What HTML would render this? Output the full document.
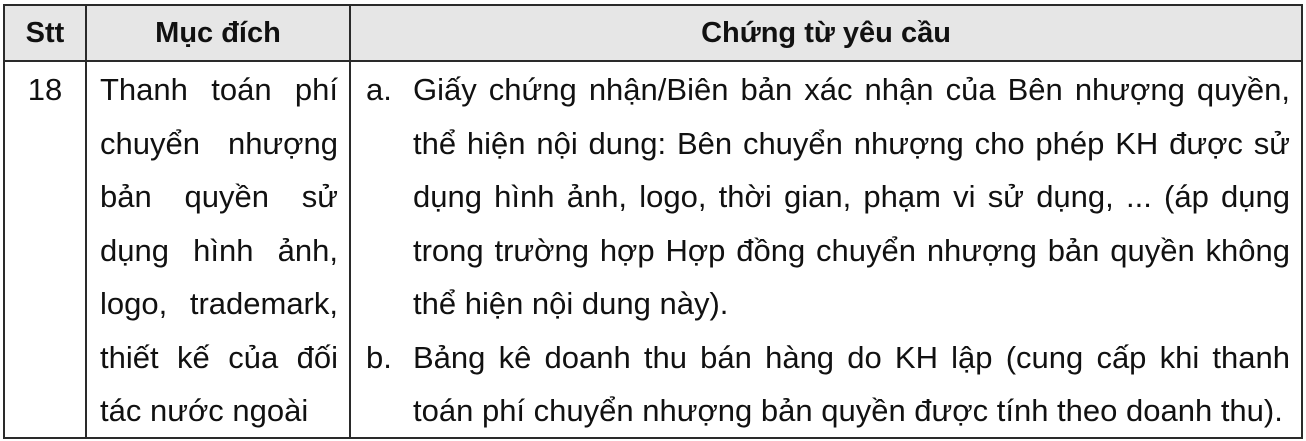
<!DOCTYPE html><html><head><meta charset="utf-8"><style>
body{margin:0;width:1306px;height:441px;background:#fff;position:relative;overflow:hidden;font-family:"Liberation Sans",Arial,sans-serif;color:#111}
.b{position:absolute;background:#2a2a2a}
.t{position:absolute;font-size:31px;white-space:nowrap;line-height:54px;height:54px}
.j{text-align:justify;text-align-last:justify}
.h{position:absolute;font-size:29px;font-weight:bold;top:5px;height:56px;line-height:56px;text-align:center}
</style></head><body>
<div style="position:absolute;left:4px;top:5px;width:1298px;height:56px;background:#e6e6e6"></div>
<div class="b" style="left:3px;top:4px;width:1300px;height:2px"></div>
<div class="b" style="left:3px;top:60px;width:1300px;height:2px"></div>
<div class="b" style="left:3px;top:437px;width:1300px;height:2px"></div>
<div class="b" style="left:3px;top:4px;width:2px;height:435px"></div>
<div class="b" style="left:85px;top:4px;width:2px;height:435px"></div>
<div class="b" style="left:349px;top:4px;width:2px;height:435px"></div>
<div class="b" style="left:1301px;top:4px;width:2px;height:435px"></div>
<div class="h" style="left:5px;width:80px">Stt</div>
<div class="h" style="left:87px;width:262px">Mục đích</div>
<div class="h" style="left:351px;width:950px">Chứng từ yêu cầu</div>
<div class="t" style="left:5px;width:80px;top:63px;text-align:center">18</div>
<div class="t j" style="left:100px;width:238px;top:63px">Thanh toán phí</div>
<div class="t j" style="left:100px;width:238px;top:116.5px">chuyển nhượng</div>
<div class="t j" style="left:100px;width:238px;top:170px">bản quyền sử</div>
<div class="t j" style="left:100px;width:238px;top:223.5px">dụng hình ảnh,</div>
<div class="t j" style="left:100px;width:238px;top:277px">logo, trademark,</div>
<div class="t j" style="left:100px;width:238px;top:330.5px">thiết kế của đối</div>
<div class="t" style="left:100px;width:238px;top:384px">tác nước ngoài</div>
<div class="t" style="left:366px;top:63px">a.</div>
<div class="t j" style="left:413px;width:877px;top:63px">Giấy chứng nhận/Biên bản xác nhận của Bên nhượng quyền,</div>
<div class="t j" style="left:413px;width:877px;top:116.5px">thể hiện nội dung: Bên chuyển nhượng cho phép KH được sử</div>
<div class="t j" style="left:413px;width:877px;top:170px">dụng hình ảnh, logo, thời gian, phạm vi sử dụng, ... (áp dụng</div>
<div class="t j" style="left:413px;width:877px;top:223.5px">trong trường hợp Hợp đồng chuyển nhượng bản quyền không</div>
<div class="t" style="left:413px;width:877px;top:277px">thể hiện nội dung này).</div>
<div class="t" style="left:366px;top:330.5px">b.</div>
<div class="t j" style="left:413px;width:877px;top:330.5px">Bảng kê doanh thu bán hàng do KH lập (cung cấp khi thanh</div>
<div class="t" style="left:413px;width:877px;top:384px">toán phí chuyển nhượng bản quyền được tính theo doanh thu).</div>
</body></html>
